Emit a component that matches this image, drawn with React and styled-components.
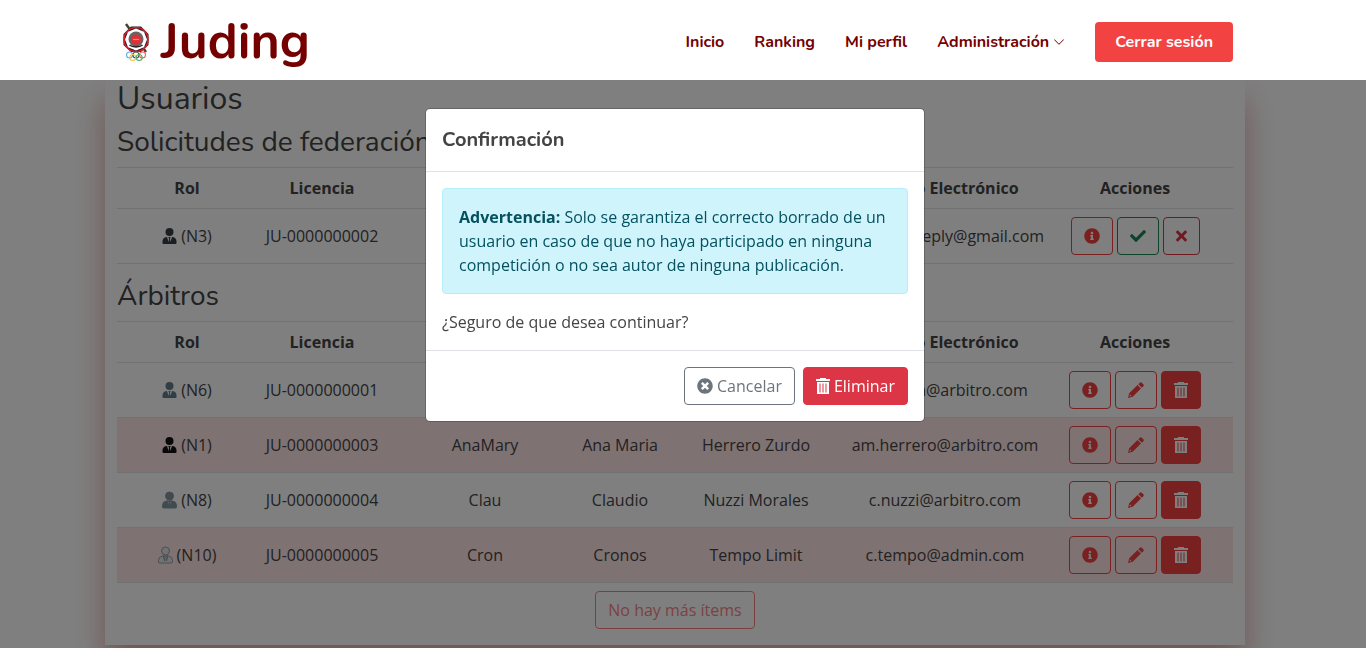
import React from "react";
import styled, { createGlobalStyle, css } from "styled-components";
import { FaInfoCircle, FaCheck, FaTimes, FaTimesCircle } from "react-icons/fa";
import { BsChevronDown } from "react-icons/bs";

const heading = '"Nunito", "Open Sans", sans-serif';

const GlobalStyle = createGlobalStyle`
  *, *::before, *::after { box-sizing: border-box; }
  body {
    margin: 0;
    background: #fff;
    color: #444;
    font: 16px/24px "Open Sans", sans-serif;
  }
  h1, h2, h3, h5, p { margin: 0; }
  a { text-decoration: none; }
`;

const Header = styled.header`
  position: sticky;
  top: 0;
  z-index: 20;
  height: 80px;
  padding-right: 16px;
  background: #fff;
`;

const HeaderInner = styled.div`
  display: flex;
  align-items: center;
  justify-content: space-between;
  max-width: 1140px;
  height: 100%;
  margin: 0 auto;
  padding: 0 12px;
`;

const Brand = styled.a`
  display: flex;
  align-items: center;
  gap: 6px;
  padding-top: 4px;
  color: #740000;
  font: 700 50px/64px ${heading};
  svg { width: 38px; height: 42px; }
`;

const Nav = styled.nav`
  display: flex;
  align-items: center;
  gap: 30px;
  padding-top: 4px;
`;

const NavLink = styled.a`
  display: flex;
  align-items: center;
  gap: 4px;
  color: #740000;
  font: 700 16px/24px ${heading};
  svg { width: 12px; height: 12px; }
`;

const Logout = styled.button`
  height: 40px;
  padding: 0 20px;
  border: 0;
  border-radius: 4px;
  background: #f34242;
  color: #fff;
  font: 700 16px/24px ${heading};
`;

const Page = styled.main`
  padding: 0 16px 3px 0;
  overflow: clip;
`;

const Card = styled.section`
  max-width: 1140px;
  margin: 0 auto;
  padding: 0 12px 16px;
  background: #fff;
  box-shadow: 0 20px 30px rgba(162, 0, 0, 0.33);
`;

const Title = styled.h2`
  margin-bottom: 8px;
  font: 400 32px/38px ${heading};
`;

const Subtitle = styled.h3`
  margin-bottom: 9px;
  font: 400 28px/32px ${heading};
`;

const Table = styled.table`
  width: 100%;
  margin-bottom: ${(p) => (p.$last ? 8 : 16)}px;
  table-layout: fixed;
  border-collapse: collapse;
  border-top: 1px solid #dee2e6;
  color: #444;
  text-align: center;
  white-space: nowrap;
`;

const Row = styled.tr`
  border-bottom: 1px solid #dee2e6;
  background: ${(p) => (p.$tinted ? "#ffe5e5" : "transparent")};
`;

const cell = css`
  padding: 8px 0;
  &:first-child { padding-left: 10px; }
  &:last-child { padding-right: 8px; }
`;

const HeadCell = styled.th`
  ${cell}
  font-weight: 700;
`;

const Cell = styled.td`
  ${cell}
  vertical-align: middle;
`;

const Rank = styled.span`
  display: flex;
  align-items: center;
  justify-content: center;
  gap: 4px;
  svg {
    width: 15px;
    height: 16px;
    color: ${(p) => p.$color};
    overflow: visible;
    stroke: ${(p) => p.$outline || "none"};
  }
`;

const Actions = styled.div`
  display: flex;
  justify-content: center;
  gap: 4px;
`;

const Button = styled.button`
  display: inline-flex;
  align-items: center;
  justify-content: center;
  gap: 4px;
  height: 38px;
  padding: 0 12px;
  border: 1px solid ${(p) => p.$color};
  border-radius: 4px;
  background: ${(p) => (p.$solid ? p.$color : "transparent")};
  color: ${(p) => (p.$solid ? "#fff" : p.$color)};
  font: 400 16px/24px "Open Sans", sans-serif;
  svg { flex: none; }
  &:disabled { opacity: 0.65; }
`;

const CrossIcon = styled(FaTimes)`
  width: 11px;
  height: 16px;
`;

const More = styled.div`
  display: flex;
  justify-content: center;
`;

const Backdrop = styled.div`
  position: fixed;
  inset: 0;
  z-index: 10;
  padding: 108px 16px 28px 0;
  background: rgba(0, 0, 0, 0.5);
`;

const Dialog = styled.div`
  max-width: 500px;
  margin: 0 auto;
  border: 1px solid rgba(0, 0, 0, 0.2);
  border-radius: 5px;
  background: #fff;
  background-clip: padding-box;
`;

const DialogHeader = styled.div`
  padding: 16px;
  border-bottom: 1px solid #dee2e6;
`;

const DialogTitle = styled.h5`
  font: 700 20px/30px ${heading};
`;

const DialogBody = styled.div`
  padding: 16px;
`;

const Alert = styled.div`
  margin-bottom: 16px;
  padding: 16px;
  border: 1px solid #b6effb;
  border-radius: 4px;
  background: #cff4fc;
  color: #055160;
`;

const DialogFooter = styled.div`
  display: flex;
  justify-content: flex-end;
  gap: 8px;
  padding: 16px;
  border-top: 1px solid #dee2e6;
`;

function Logo() {
  return (
    <svg viewBox="0 0 38 42" aria-hidden="true">
      <path d="M9 3 29 31" stroke="#39452f" strokeWidth="2.4" />
      <path d="M14 5.500h10l7.500 7.500v11l-7.500 7H14l-7.500-7V13z" fill="#201c20" />
      <circle cx="19" cy="18.500" r="12" fill="none" stroke="#d91f2b" strokeWidth="1.600" />
      <path d="m19 7.500 8 3.200 3 7.800-3 7.800-8 3.200-8-3.200-3-7.800 3-7.800z" fill="#fff" />
      <circle cx="19" cy="18" r="7.500" fill="#66666a" />
      <circle cx="19" cy="18.500" r="5.300" fill="#df3034" />
      <path d="M16 18.500h6" stroke="#f28c7f" strokeWidth="1.200" />
      <path d="M12.500 24c3 2.500 10 2.500 13 0" fill="none" stroke="#28282b" strokeWidth="1.600" />
      <g fill="none" strokeWidth="1.100">
        <circle cx="12.500" cy="34" r="3" stroke="#5eb1e4" />
        <circle cx="19" cy="34" r="3" stroke="#555" />
        <circle cx="25.500" cy="34" r="3" stroke="#ed6465" />
        <circle cx="15.800" cy="36.500" r="3" stroke="#ecc64e" />
        <circle cx="22.200" cy="36.500" r="3" stroke="#52ae6c" />
      </g>
    </svg>
  );
}

function Person() {
  return (
    <svg viewBox="0 0 14 16" fill="currentColor" aria-hidden="true">
      <circle cx="7" cy="4" r="4" />
      <path
        fillRule="evenodd"
        d="M4 9h6q4 .5 4 4.500V15q0 1-1 1H1q-1 0-1-1v-1.500Q0 9.500 4 9zM4.500 9l1.600 5 .4-3.500L5.800 9zM9.500 9l-1.600 5-.4-3.500L8.200 9z"
      />
    </svg>
  );
}

function Pencil() {
  return (
    <svg width="16" height="16" viewBox="0 0 16 16" fill="currentColor" aria-hidden="true">
      <path d="M10.300 2.200 11.800.7q1-1 2 0l1.500 1.500q1 1 0 2l-1.500 1.500z" />
      <path fillRule="evenodd" d="m9.500 3 3.500 3.500-8.300 8.300L0 16l1.200-4.700zM2 12.500l-.5 2 2-.5z" />
    </svg>
  );
}

function Bin() {
  return (
    <svg width="14" height="16" viewBox="0 0 14 16" fill="currentColor" aria-hidden="true">
      <path d="M0 1h4V0h6v1h4v2H0z" />
      <path fillRule="evenodd" d="M1 4h12v12H1zM3.500 5.500v9h1v-9zM6.500 5.500v9h1v-9zM9.500 5.500v9h1v-9z" />
    </svg>
  );
}

const columns = [
  ["Rol", 130],
  ["Licencia", 150],
  ["Usuario", 176],
  ["Nombre", 94],
  ["Apellidos", 178],
  ["Correo Electrónico", 200],
  ["Acciones", 188],
];

const requests = [
  { rank: "(N3)", color: "#343f47", values: ["JU-0000000002", "", "", "", "juding.noreply@gmail.com"] },
];

const referees = [
  { rank: "(N6)", color: "#607d8b", values: ["JU-0000000001", "", "", "", "p.martin@arbitro.com"] },
  { rank: "(N1)", color: "#111", values: ["JU-0000000003", "AnaMary", "Ana Maria", "Herrero Zurdo", "am.herrero@arbitro.com"] },
  { rank: "(N8)", color: "#82949c", outline: "#8a989e", values: ["JU-0000000004", "Clau", "Claudio", "Nuzzi Morales", "c.nuzzi@arbitro.com"] },
  { rank: "(N10)", color: "#dfe6e9", outline: "#9a9c9d", values: ["JU-0000000005", "Cron", "Cronos", "Tempo Limit", "c.tempo@admin.com"] },
];

function UserTable({ users, pending }) {
  return (
    <Table $last={!pending}>
      <colgroup>
        {columns.map(([name, width]) => <col key={name} width={width} />)}
      </colgroup>
      <thead>
        <Row>{columns.map(([name]) => <HeadCell key={name} scope="col">{name}</HeadCell>)}</Row>
      </thead>
      <tbody>
        {users.map((user, i) => (
          <Row key={user.rank} $tinted={i % 2 === 1}>
            <Cell><Rank $color={user.color} $outline={user.outline}><Person />{user.rank}</Rank></Cell>
            {user.values.map((value, n) => <Cell key={n}>{value}</Cell>)}
            <Cell>
              <Actions>
                <Button $color="#f34242" aria-label="Información"><FaInfoCircle /></Button>
                {pending ? (
                  <>
                    <Button $color="#198754" aria-label="Aceptar"><FaCheck /></Button>
                    <Button $color="#dc3545" aria-label="Rechazar"><CrossIcon /></Button>
                  </>
                ) : (
                  <>
                    <Button $color="#f34242" aria-label="Editar"><Pencil /></Button>
                    <Button $color="#f34242" $solid aria-label="Eliminar usuario"><Bin /></Button>
                  </>
                )}
              </Actions>
            </Cell>
          </Row>
        ))}
      </tbody>
    </Table>
  );
}

export default function App() {
  return (
    <>
      <GlobalStyle />
      <Header>
        <HeaderInner>
          <Brand href="#"><Logo />Juding</Brand>
          <Nav>
            <NavLink href="#">Inicio</NavLink>
            <NavLink href="#">Ranking</NavLink>
            <NavLink href="#">Mi perfil</NavLink>
            <NavLink href="#">Administración<BsChevronDown /></NavLink>
            <Logout>Cerrar sesión</Logout>
          </Nav>
        </HeaderInner>
      </Header>
      <Page>
        <Card>
          <Title>Usuarios</Title>
          <Subtitle>Solicitudes de federación</Subtitle>
          <UserTable users={requests} pending />
          <Subtitle>Árbitros</Subtitle>
          <UserTable users={referees} />
          <More><Button $color="#f34242" disabled>No hay más ítems</Button></More>
        </Card>
      </Page>
      <Backdrop>
        <Dialog role="dialog" aria-modal="true" aria-labelledby="dialog-title">
          <DialogHeader><DialogTitle id="dialog-title">Confirmación</DialogTitle></DialogHeader>
          <DialogBody>
            <Alert role="alert">
              <strong>Advertencia:</strong> Solo se garantiza el correcto borrado de un usuario en caso de que no haya participado en ninguna competición o no sea autor de ninguna publicación.
            </Alert>
            <p>¿Seguro de que desea continuar?</p>
          </DialogBody>
          <DialogFooter>
            <Button $color="#6c757d"><FaTimesCircle />Cancelar</Button>
            <Button $color="#dc3545" $solid><Bin />Eliminar</Button>
          </DialogFooter>
        </Dialog>
      </Backdrop>
    </>
  );
}
